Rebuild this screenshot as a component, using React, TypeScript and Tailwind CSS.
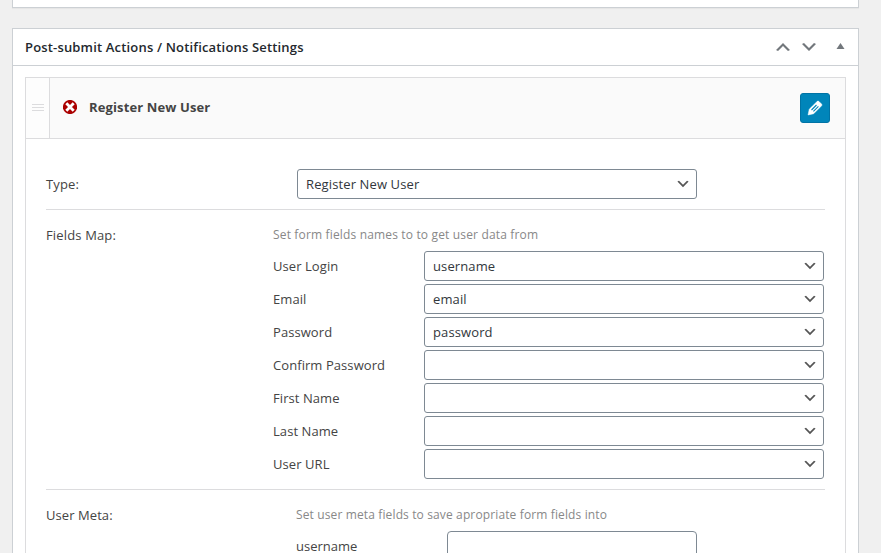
import React from "react";

const fields = [
  { label: "User Login", value: "username" },
  { label: "Email", value: "email" },
  { label: "Password", value: "password" },
  { label: "Confirm Password", value: "" },
  { label: "First Name", value: "" },
  { label: "Last Name", value: "" },
  { label: "User URL", value: "" },
];

function Glyph({ d, className }: { d: string; className: string }) {
  return (
    <svg viewBox="0 0 20 20" className={className} fill="currentColor" aria-hidden="true">
      <path d={d} />
    </svg>
  );
}

const DOWN = "M5 6l5 5 5-5 2 1-7 7-7-7 2-1z";
const UP = "M15 14l-5-5-5 5-2-1 7-7 7 7-2 1z";

function DismissIcon() {
  return (
    <svg viewBox="0 0 14 14" className="ml-[13px] size-[14px]" aria-hidden="true">
      <circle cx="7" cy="7" r="7.1" fill="#a00" />
      <path d="M4.3 4.3l5.4 5.4M9.7 4.3l-5.4 5.4" stroke="#fff" strokeWidth="2.8" strokeLinecap="square" />
    </svg>
  );
}

function EditIcon() {
  return (
    <svg viewBox="0 0 20 20" className="size-5" aria-hidden="true">
      <path
        fill="#fff"
        stroke="#fff"
        strokeWidth="0.5"
        d="M13.89 3.39l2.71 2.72c.46.46.42 1.24.03 1.64l-8.01 8.02-5.56 1.16 1.16-5.58s7.6-7.63 7.99-8.03c.39-.39 1.22-.39 1.68.07z"
      />
      <path d="M6.5 12l5-5M8.4 13.4l5-5" stroke="#0085ba" strokeWidth="1.1" />
    </svg>
  );
}

function Select({ value }: { value: string }) {
  return (
    <div className="flex h-[30px] w-[400px] shrink-0 items-center justify-between rounded-[3px] border border-[#7e8993] bg-white pr-[5px] pl-2 text-[#32373c]">
      <span className="tracking-[0.12px]">{value}</span>
      <Glyph d={DOWN} className="size-4 text-[#555]" />
    </div>
  );
}

export default function App() {
  return (
    <div className="h-[553px] overflow-hidden bg-[#f0f0f0] pl-3 font-['Open_Sans','Noto_Sans',sans-serif] text-[13px] leading-5 text-[#444]">
      <div className="h-2 w-[847px] border border-t-0 border-[#ccd0d4] bg-white shadow-[0_1px_1px_rgba(0,0,0,0.04)]" />
      <section className="mt-5 h-[525px] w-[847px] overflow-hidden border border-b-0 border-[#ccd0d4] bg-white">
        <header className="flex h-[37px] items-center border-b border-[#ccd0d4] pl-3">
          <h2 className="grow text-[13px] font-semibold tracking-[0.17px] text-[#23282d]">
            Post-submit Actions / Notifications Settings
          </h2>
          <Glyph d={UP} className="mr-[6px] size-5 text-[#72777c]" />
          <Glyph d={DOWN} className="mr-[17px] size-5 text-[#72777c]" />
          <svg viewBox="0 0 8 6" className="mr-[13px] mb-[2px] h-[6px] w-[9px]" fill="#72777c">
            <path d="M4 0l4 6H0z" />
          </svg>
        </header>
        <div className="mx-3 mt-[11px] border-x border-t border-[#dcdcde]">
          <div className="flex h-[61px] items-center border-b border-[#dcdcde] bg-[#fafafa]">
            <div className="flex h-full w-6 flex-col items-center justify-center gap-[2px] border-r border-[#dcdcde] bg-[#fdfdfd] pb-[1px]">
              <i className="h-px w-3 bg-[#dcdcde]" />
              <i className="h-px w-3 bg-[#dcdcde]" />
              <i className="h-px w-3 bg-[#dcdcde]" />
            </div>
            <div className="flex grow items-center pb-[2px]">
              <DismissIcon />
              <strong className="ml-3 font-bold tracking-[0.12px]">Register New User</strong>
            </div>
            <button className="mr-[15px] flex size-[30px] items-center justify-center rounded-[3px] border border-[#0073a5] bg-[#0085ba]">
              <EditIcon />
            </button>
          </div>
          <div className="px-5 pt-[30px]">
            <div className="flex h-[41px] items-start border-b border-[#dcdcde]">
              <span className="mt-[5px] w-[251px] tracking-[0.15px]">Type:</span>
              <Select value="Register New User" />
            </div>
            <div className="flex h-[280px] border-b border-[#dcdcde] pt-[15px]">
              <span className="w-[227px] tracking-[0.15px]">Fields Map:</span>
              <div>
                <p className="h-[26px] text-[12px] tracking-[0.16px] text-[#888]">
                  Set form fields names to to get user data from
                </p>
                <div className="flex flex-col gap-[3px]">
                  {fields.map((f) => (
                    <div key={f.label} className="flex items-center">
                      <span className="w-[151px] tracking-[0.07px]">{f.label}</span>
                      <Select value={f.value} />
                    </div>
                  ))}
                </div>
              </div>
            </div>
            <div className="flex pt-[15px]">
              <span className="w-[250px] tracking-[0.07px]">User Meta:</span>
              <div>
                <p className="h-[26px] text-[12px] tracking-[0.13px] text-[#888]">
                  Set user meta fields to save apropriate form fields into
                </p>
                <div className="flex items-center">
                  <span className="w-[151px]">username</span>
                  <div className="h-[30px] w-[250px] rounded-[4px] border border-[#7e8993]" />
                </div>
              </div>
            </div>
          </div>
        </div>
      </section>
    </div>
  );
}
